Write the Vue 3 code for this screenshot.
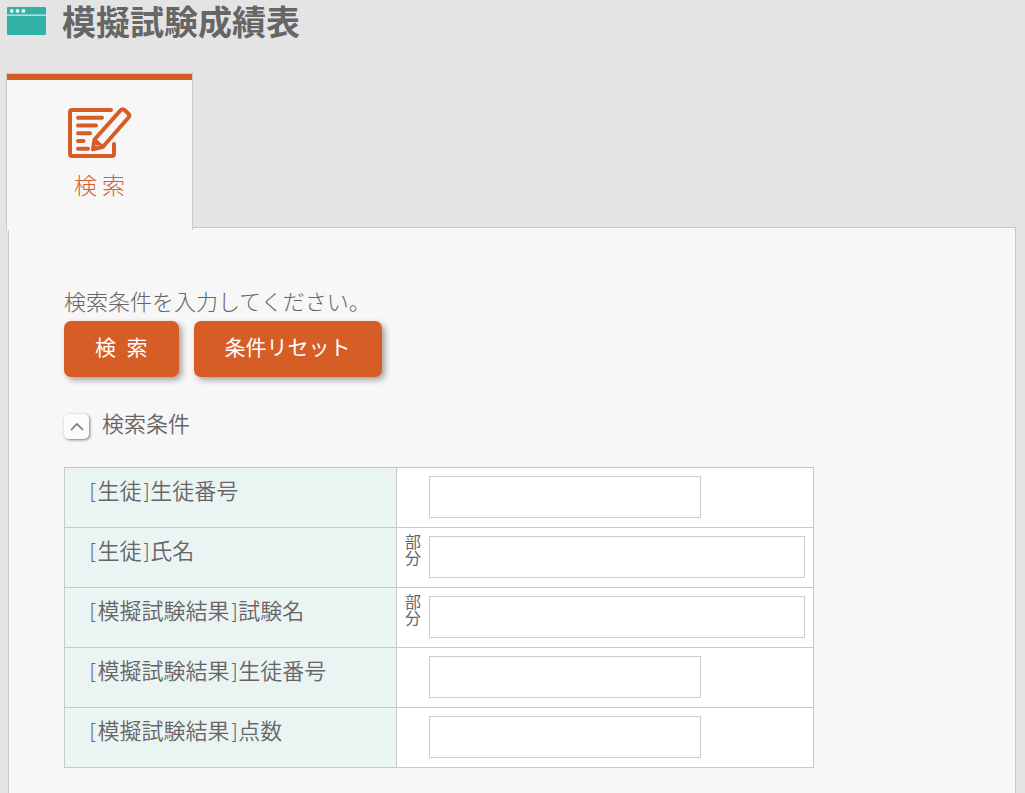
<script setup>
import { ref } from 'vue'

const open = ref(true)
const fields = ref([
  { id: 'student-no', label: '[生徒]生徒番号', partial: false, value: '' },
  { id: 'student-name', label: '[生徒]氏名', partial: true, value: '' },
  { id: 'exam-name', label: '[模擬試験結果]試験名', partial: true, value: '' },
  { id: 'result-no', label: '[模擬試験結果]生徒番号', partial: false, value: '' },
  { id: 'result-score', label: '[模擬試験結果]点数', partial: false, value: '' }
])

function reset() {
  fields.value.forEach((field) => { field.value = '' })
}
</script>

<template>
  <div class="page">
    <header class="title-bar">
      <svg class="title-icon" viewBox="0 0 39 28" aria-hidden="true">
        <rect width="39" height="28" rx="1" fill="#32b1a6" />
        <path d="M0 8.2h39" stroke="#d6eeeb" stroke-width="1.3" />
        <g fill="#e4f5f3">
          <circle cx="4.8" cy="4" r="1.9" />
          <circle cx="10.6" cy="4" r="1.9" />
          <circle cx="16.4" cy="4" r="1.9" />
        </g>
      </svg>
      <h1>模擬試験成績表</h1>
    </header>

    <nav class="tabs">
      <a class="tab" href="#search">
        <svg class="tab-icon" viewBox="0 0 64 52" fill="none" stroke="#d65e26" aria-hidden="true">
          <path d="M43 3H4a2 2 0 0 0-2 2v42a2 2 0 0 0 2 2h40a2 2 0 0 0 2-2V37" stroke-width="4" stroke-linecap="round" stroke-linejoin="round" />
          <path d="M10 10.7h24M10 18.4h18M10 26.2h12M10 34h5.5M10 41.8h10" stroke-width="4" stroke-linecap="round" />
          <path d="M26.5 32.5 52.5 3.4q2-2.2 4.2-.2l3.6 3.3q2 1.9.2 4L35 39.8 25 42.3z" stroke-width="4" stroke-linejoin="round" />
          <path d="M26.5 32.5 35 39.8M27 34l3 4.2" stroke-width="3" />
        </svg>
        <span class="tab-label">検 索</span>
      </a>
    </nav>

    <main id="search" class="panel">
      <p class="guide">検索条件を入力してください。</p>
      <div class="actions">
        <button type="button" class="btn">検&ensp;索</button>
        <button type="button" class="btn" @click="reset">条件リセット</button>
      </div>

      <div class="section-head">
        <button type="button" class="toggle" aria-label="検索条件の開閉" :aria-expanded="open" @click="open = !open">
          <svg viewBox="0 0 14 9" aria-hidden="true">
            <path d="M1 8 7 2l6 6" fill="none" stroke="#777" stroke-width="1.6" />
          </svg>
        </button>
        <h2>検索条件</h2>
      </div>

      <table v-if="open" class="conditions">
        <tbody>
          <tr v-for="field in fields" :key="field.id">
            <th scope="row"><label :for="field.id">{{ field.label }}</label></th>
            <td>
              <div class="entry">
                <span class="match"><template v-if="field.partial">部<br>分</template></span>
                <input :id="field.id" v-model="field.value" type="text" :class="{ wide: field.partial }">
              </div>
            </td>
          </tr>
        </tbody>
      </table>
    </main>
  </div>
</template>

<style>
body {
  margin: 0;
  background: #e4e4e4;
}
</style>

<style scoped>
.page {
  box-sizing: border-box;
  min-height: 100vh;
  display: flex;
  flex-direction: column;
  padding: 0 9px 0 7px;
  background: #e4e4e4;
  color: #666;
  font-family: "Noto Sans CJK JP", sans-serif;
  font-size: 22px;
  line-height: 32px;
}

h1, h2, p {
  margin: 0;
}

.title-bar {
  display: flex;
  align-items: flex-start;
  gap: 16px;
  height: 44px;
}

.title-icon {
  width: 39px;
  height: 28px;
  margin-top: 7px;
}

h1 {
  font-size: 34px;
  line-height: 42px;
  font-weight: 700;
}

.tabs {
  display: flex;
  margin-top: 29px;
}

.tab {
  position: relative;
  z-index: 1;
  box-sizing: border-box;
  width: 187px;
  height: 157px;
  margin: 0 0 -3px -1px;
  padding-top: 33px;
  display: flex;
  flex-direction: column;
  align-items: center;
  gap: 9px;
  border: 1px solid #c8c8c8;
  border-bottom: 0;
  background: linear-gradient(#d65e26 6px, #f7f7f7 6px);
  color: #d65e26;
  text-decoration: none;
}

.tab-icon {
  width: 64px;
  height: 52px;
}

.tab-label {
  font-size: 23px;
  font-weight: 300;
}

.panel {
  flex: 1;
  padding: 56px 55px 24px;
  margin-left: 1px;
  border: 1px solid #c8c8c8;
  border-bottom: 0;
  background: #f7f7f7;
}

.guide {
  font-weight: 300;
}

.actions {
  display: flex;
  gap: 15px;
  margin-top: 5px;
}

.btn {
  padding: 9px 31px 15px;
  border: 0;
  border-radius: 7px;
  background: #d65e26;
  box-shadow: 3px 3px 6px rgba(0, 0, 0, 0.35);
  color: #fff;
  font: inherit;
  font-size: 21px;
  cursor: pointer;
}

.section-head {
  display: flex;
  align-items: flex-start;
  gap: 13px;
  margin-top: 32px;
}

.toggle {
  display: flex;
  align-items: center;
  justify-content: center;
  width: 25px;
  height: 25px;
  margin-top: 5px;
  padding: 0;
  border: 0;
  border-radius: 5px;
  background: #fbfbfb;
  box-shadow: 1px 1px 3px rgba(0, 0, 0, 0.5);
}

.toggle svg {
  width: 14px;
  height: 9px;
}

h2 {
  font-size: 22px;
  line-height: 26px;
  font-weight: 350;
}

.conditions {
  width: 750px;
  max-width: 100%;
  margin-top: 28px;
  border-collapse: collapse;
}

.conditions th,
.conditions td {
  box-sizing: border-box;
  height: 60px;
  border: 1px solid #c8c8c8;
  vertical-align: top;
}

.conditions th {
  width: 332px;
  padding: 8px 24px;
  background: #eaf4f3;
  font-family: "DejaVu Sans", "Noto Sans CJK JP", sans-serif;
  font-weight: 350;
  text-align: left;
}

.conditions td {
  padding: 5px 8px;
  background: #fff;
}

.entry {
  display: flex;
  gap: 8px;
}

.match {
  flex: none;
  width: 16px;
  font-size: 16px;
  line-height: 16px;
}

.entry input {
  box-sizing: border-box;
  width: 272px;
  height: 42px;
  margin: 3px 0 0;
  padding: 4px 8px;
  border: 1px solid #ccc;
  border-radius: 0;
  background: #fff;
  color: #666;
  font: inherit;
}

.entry input.wide {
  flex: 1;
  min-width: 0;
}
</style>
